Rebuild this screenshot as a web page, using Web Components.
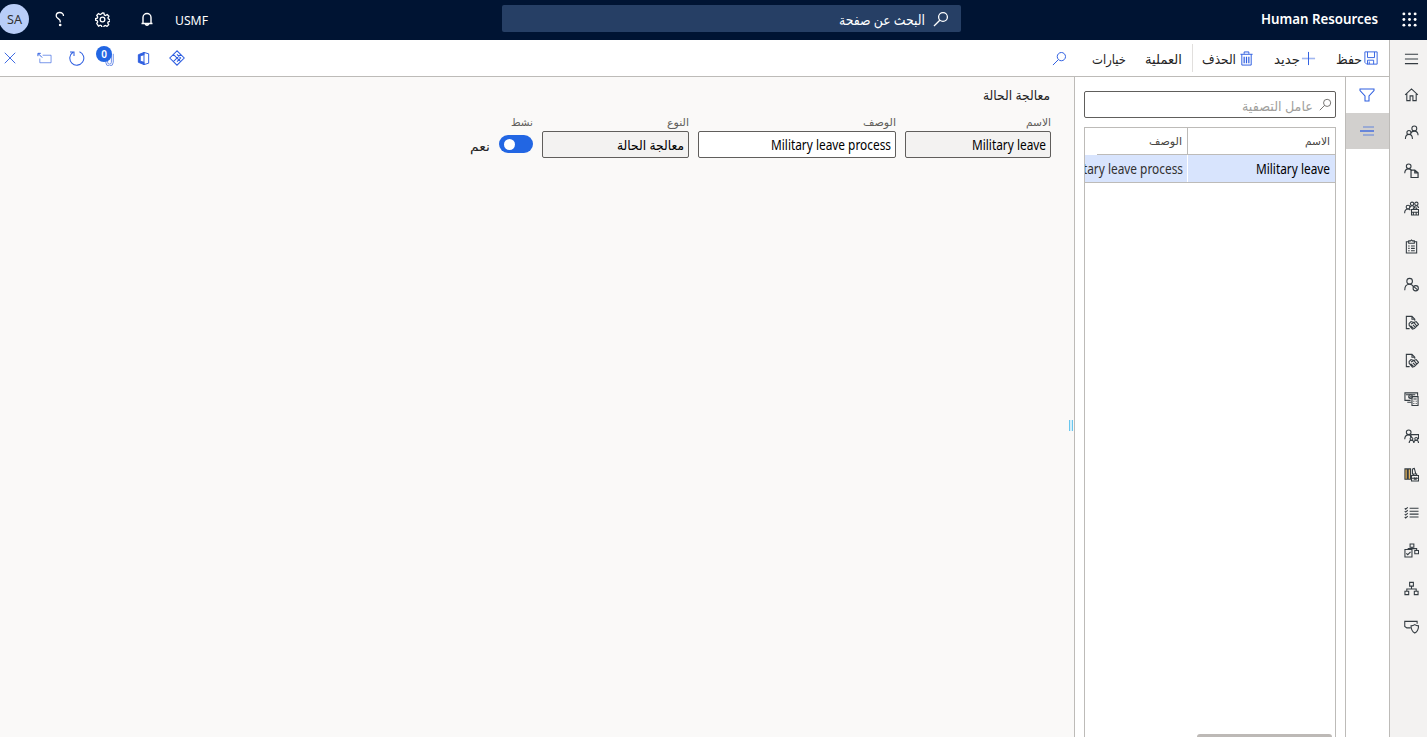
<!DOCTYPE html>
<html lang="ar"><head><meta charset="utf-8"><title>Human Resources</title>
<style>html,body{margin:0;height:100%;overflow:hidden}body{font-family:"Noto Sans","Open Sans","DejaVu Sans",sans-serif;color:#242424}</style>
</head><body><hr-app></hr-app>
<script>
const define=(name,html,ready)=>customElements.define(name,class extends HTMLElement{
  connectedCallback(){
    if(this.shadowRoot)return;
    const r=this.attachShadow({mode:'open'});
    r.innerHTML='<style>*{box-sizing:border-box}</style>'+(typeof html==='function'?html(this):html);
    if(ready)ready(this,r);
  }
});
/* Icons on a 16 unit grid */
const person='<circle cx="6" cy="4.5" r="3"/><path d="M.8 14c0-4 2.200-6.200 5.200-6.200 1.600 0 3 .8 3.800 2.200"/>';
const smallPerson='<circle cx="5" cy="3.500" r="2.500"/><path d="M.8 11c0-3 1.600-4.700 4.200-4.700 1.500 0 2.700.8 3.300 2"/>';
const hand='<path d="M6 14.500H2.500v-13h6l3 3V6M8.500 1.500v3h3"/><path d="M5.500 9l2-2 3 1 2.500-1 2.500 3-4.500 4.500-2 .5L5.500 11zM7.500 9.500l3-1.500 3 3.500M7 11.500l3 2.500M9.500 10.500l2.500 2.500" stroke-width="1.200"/>';
const icons={
 search:'<circle cx="10" cy="6" r="4.4"/><path d="M6.8 9.2L1 15"/>',
 bell:'<path d="M2.5 12.5h11M4 12V6.5a4 4 0 0 1 8 0V12M6.3 13a1.8 1.8 0 0 0 3.4 0"/>',
 gear:'<path d="M8 1l1.5.2.5 2 1.2.5 1.8-1 1.8 1.8-1 1.8.5 1.2 1.6.5v2l-1.8.5-.5 1.2 1 1.8-1.8 1.8-1.8-1-1.2.5-.5 1.6h-2l-.5-1.8-1.2-.5-1.8 1L1.9 12.3l1-1.8-.5-1.2-1.8-.5V7l1.8-.5.5-1.2-1-1.8 1.800-1.800 1.800 1 1.200-.5z"/><circle cx="8" cy="8" r="2.5"/>',
 help:'<path d="M11.5 5c0-2-1.6-3.500-3.800-3.500S4.200 3 4.200 5c0 2.500 4 2.700 4 5v1.500"/><circle cx="8.2" cy="14" r=".7" fill="currentColor"/>',
 waffle:'<g fill="currentColor" stroke="none">'+[2,8,14].map(y=>[2,8,14].map(x=>`<circle cx="${x}" cy="${y}" r="1.55"/>`).join('')).join('')+'</g>',
 close:'<path d="M2 2l12 12M14 2L2 14"/>',
 pop:'<path d="M6 4.500h9v8H3V8" opacity=".65"/><path d="M1.500 3l4 4M1 5.500V2.500h3"/>',
 refresh:'<path d="M10.5 1.700A7 7 0 1 1 4 2.300M1 2h4v4"/>',
 clip:'<path d="M4 3v9a4 4 0 0 0 8 0V3M6 5v7a2 2 0 0 0 4 0V3"/>',
 office:'<path d="M8.500 1.500l5 1.500v10l-5 1.500M8.500 1.500v13"/><path fill="currentColor" d="M8.500 1.500L2.500 4v8l6 2.500V12L4.500 11V5l4-1z"/>',
 diamond:'<path d="M8 .8L.8 8 8 15.200 15.200 8zM4.400 4.400l7.200 7.200M11.600 4.400L4.400 11.600M8 4.400L11.600 8 8 11.600"/>',
 trash:'<path d="M1.500 3.500h13M5.500 3V1h5v2M3 3.500V15h10V3.500"/><path d="M5.500 6v7M8 6v7M10.500 6v7" stroke-width="1.300"/>',
 plus:'<path d="M8 1v14"/><path opacity=".45" stroke-width="1.700" d="M1 8h14"/>',
 save:'<path d="M1 1h14v14H3l-2-2zM4 1v6.500h8V1M4 15v-4.500h7V15M6 12v3"/>',
 menu:'<path d="M1 3.500h14M1 8.500h14M1 13.500h14"/>',
 funnel:'<path d="M1 2h14v1.500L10 9v5H6V9L1 3.500z"/>',
 lines:'<path d="M1 8h14" stroke-width="1.300"/><path opacity=".45" stroke-width="1.700" d="M4 4h11M4 12h11"/>',
 home:'<path d="M1.200 8.300L8 2l6.800 6.300M3 6.700v7.800h3.500v-5h3v5H13V6.700"/>',
 people:'<circle cx="11" cy="3.700" r="2.600"/><path d="M7.300 8.500c.7-1.400 2-2 3.700-2 2.500 0 4 1.700 4 4.500"/><circle cx="5.300" cy="8" r="2.200"/><path d="M1.500 15c0-3 1.400-5 3.800-5s3.700 2 3.700 5"/>',
 persondoc:smallPerson+'<path d="M7.500 7.500h4l3.500 3v5H7.500zM11.500 7.500v3H15" stroke-width="1.300"/>',
 team:'<circle cx="4.300" cy="6.500" r="2"/><path d="M.7 13c0-3 1.300-4.400 3.600-4.400 1 0 2 .5 2.500 1.200"/><circle cx="8.600" cy="3" r="1.800"/><circle cx="13.200" cy="3" r="1.800"/><path d="M6 7c.5-1.400 1.400-2 2.600-2s2 .6 2.400 1.800C11.400 5.600 12.200 5 13.200 5s2.200.8 2.300 2.500M8 9h7.500v6H8zM10 9V7.500h3.500V9M8 12h7.500M10 15v-3M13 15v-3"/>',
 clipboard:'<path d="M5 3H2.500v12h11V3H11M5 2h2l1-1 1 1h2v2.500H5zM4.500 7.500h1.500M7.500 7.500h4M4.500 10h1.500M7.500 10h4M4.500 12.500h1.500M7.500 12.500h4"/>',
 block:person+'<circle cx="12.500" cy="12" r="2.800"/><path d="M10.500 10.200l4 3.600"/>',
 hand,
 calc:'<path d="M7 10H1V2h13.500v3M3.500 12H8M2 4h10M5 7l3-1"/><circle cx="7" cy="6" r="2"/><path d="M8.500 6h6.500v9.500H8.500zM10 8.500h3.500M10 11h1M12.500 11h1M10 13.300h1M12.500 13.300h1"/>',
 training:smallPerson+'<path d="M7 6h8.500v5M7 6v3"/><circle cx="8" cy="10.500" r="1.500"/><circle cx="13" cy="10.500" r="1.500"/><path d="M5.500 15c0-2 1-3 2.500-3s2.400 1 2.500 3c.1-2 1-3 2.500-3s2.500 1 2.500 3"/>',
 books:'<path d="M1 2h2.500v11H1zM4.500 2H7v11H4.500z" fill="#e4b45c"/><path d="M9 2l2-.5L12.500 7M9 2v6M8 9h7.500v6H8zM10 9V7.500h3.500V9M8 12h7.500M11 11v2h2v-2"/>',
 checks:'<path d="M6 3.500h9.500M6 6.600h9.500M6 9.700h9.500M6 12.800h9.500M.8 3.500l1 1L4 2.500M.8 6.600l1 1L4 5.600M.8 9.700l1 1L4 8.700M.8 12.800l1 1L4 11.800"/>',
 flowcheck:'<path d="M1 7h7.500v8H1zM2.500 11l1.500 1.500 3-3M6.500 1h4v3.500h-4zM8.500 4.500V6M4.500 7V6h9v2M11.500 8h4v3.500h-4z"/>',
 org:'<path d="M6 1.500h4v4H6zM8 5.500v3M3 11V8.500h10V11M1 11h4v3.500H1zM11 11h4v3.500h-4z"/>',
 shield:'<path d="M7 9.500H3L.8 8V2.500H14V5M11.500 6c1.200.9 2.400 1.300 4 1.300 0 4.200-1.100 6.200-4 7.700-2.900-1.500-4-3.500-4-7.700 1.600 0 2.800-.4 4-1.300z"/>'
};
define('ui-icon',e=>{const s=+(e.getAttribute('size')||16);return `<style>:host{display:block;flex:none;width:${s}px;height:${s}px}svg{display:block}</style><svg width="${s}" height="${s}" viewBox="0 0 16 16" fill="none" stroke="currentColor" stroke-width="${e.getAttribute('weight')||1.05}">${icons[e.getAttribute('name')]}</svg>`});
/* A single line label condensed to a set measure */
define('fit-text',e=>`<style>:host{display:block;flex:none;width:${e.getAttribute('w')}px;height:20px;line-height:20px;white-space:nowrap;direction:ltr}span{display:inline-block;transform-origin:0 50%}</style><span><slot></slot></span>`,(e,r)=>{
  const s=r.querySelector('span');
  requestAnimationFrame(()=>{s.style.transform='none';const n=s.getBoundingClientRect().width;if(n)s.style.transform=`scaleX(${+e.getAttribute('w')/n})`});
});
define('top-bar',`<style>:host{display:flex;align-items:center;height:40px;background:#001433;color:#fff;flex:none;font-size:13px}
.av{width:30px;height:30px;border-radius:50%;background:#b8cdf8;color:#323130;margin:-3px 0 0 -1px;display:flex;align-items:center;justify-content:center;flex:none}
.s{margin-left:294px;width:459px;height:27px;border-radius:2px;background:#263f65;display:flex;align-items:center;justify-content:flex-end;gap:8px;padding-right:12px;margin-top:-3px}
ui-icon{margin-top:-2px}</style>
<div class="av"><fit-text w="15">SA</fit-text></div><ui-icon name="help" weight="1.3" style="margin-left:23px"></ui-icon><ui-icon name="gear" size="15" weight="1.4" style="margin-left:27px"></ui-icon><ui-icon name="bell" weight="1.4" style="margin-left:29px"></ui-icon><fit-text w="33" style="margin-left:20px">USMF</fit-text>
<div class="s"><fit-text w="86" style="font-size:14px;margin-top:2px">البحث عن صفحة</fit-text><ui-icon name="search" weight="1.3" style="margin-top:0"></ui-icon></div>
<fit-text w="117" style="margin-left:300px;font-weight:600;font-size:14px;margin-top:-2px">Human Resources</fit-text><ui-icon name="waffle" size="15" style="margin-left:24px"></ui-icon>`);
define('tool-bar',`<style>:host{display:flex;align-items:center;height:37px;border-bottom:1px solid #bdbbb8;background:#fff;flex:none;font-size:13.5px}
ui-icon{color:#2f5fe0}.clip{position:relative;margin-left:17px}.b{position:absolute;left:-6px;top:-5px;width:16px;height:16px;border-radius:50%;background:#2266e3;color:#fff;font:600 10px/16px "Noto Sans";text-align:center}
.sep{width:1px;height:28px;background:#e1dfdd;margin-left:10px}fit-text{margin-top:2px}</style>
<ui-icon name="close" size="14" style="margin-left:3px"></ui-icon><ui-icon name="pop" size="15" style="margin-left:20px"></ui-icon><ui-icon name="refresh" style="margin-left:17px"></ui-icon>
<div class="clip"><ui-icon name="clip" size="15" style="opacity:.7"></ui-icon><span class="b">0</span></div>
<ui-icon name="office" size="15" style="margin-left:19px"></ui-icon><ui-icon name="diamond" size="16" style="margin-left:18px"></ui-icon>
<ui-icon name="search" size="15" style="margin-left:867px"></ui-icon><fit-text w="34" style="margin-left:25px;font-weight:500">خيارات</fit-text><fit-text w="37" style="margin-left:19px;font-weight:500">العملية</fit-text><span class="sep"></span>
<fit-text w="34" style="margin-left:9px">الحذف</fit-text><ui-icon name="trash" size="15" style="margin-left:3px"></ui-icon><fit-text w="26" style="margin-left:20px">جديد</fit-text><ui-icon name="plus" size="15" style="margin-left:1px"></ui-icon><fit-text w="26" style="margin-left:20px">حفظ</fit-text><ui-icon name="save" size="14" style="margin-left:2px"></ui-icon>`);
define('form-field',e=>`<style>:host{display:block;flex:none;width:${e.getAttribute('width')}px}.l{display:flex;justify-content:flex-end;height:19px;font-size:10.5px;font-weight:500;color:#605e5c}.i{height:27px;border:1px solid #605e5c;border-radius:2px;background:${e.hasAttribute('edit')?'#fff':'#f3f2f1'};display:flex;justify-content:flex-end;align-items:center;padding:0 4px 0;font-size:13.5px;color:#000}</style><div class="l"><fit-text w="${e.getAttribute('lw')}">${e.getAttribute('label')}</fit-text></div><div class="i"><slot></slot></div>`);
define('toggle-field',`<style>:host{display:block;width:63px}.l{display:flex;justify-content:flex-end;height:19px;font-size:10.5px;font-weight:500;color:#605e5c}.r{display:flex;align-items:center;gap:9px;height:26px;font-size:13px}.t{width:34px;height:18px;border-radius:9px;background:#2266e3;padding:3.500px 5px}.t i{display:block;width:11px;height:11px;border-radius:50%;background:#fff}</style><div class="l"><fit-text w="22">نشط</fit-text></div><div class="r"><fit-text w="20" style="margin-top:3px">نعم</fit-text><div class="t"><i></i></div></div>`);
define('case-form',`<style>:host{display:flex;flex:1;position:relative;background:#faf9f8;border-right:1px solid #bdbbb8;flex-direction:column;align-items:flex-end;padding:8px 23px 0 0}.f{display:flex;gap:9px;margin-top:7px}.g{position:absolute;right:1px;top:343px;width:4px;height:11px;border:solid #69c7ef;border-width:0 1px;background:#d5effb}</style>
<fit-text w="67" style="font-size:13.5px;margin-right:1px">معالجة الحالة</fit-text><div class="f"><toggle-field></toggle-field><form-field width="147" label="النوع" lw="22"><fit-text w="67">معالجة الحالة</fit-text></form-field><form-field width="198" label="الوصف" lw="33" edit><fit-text w="120">Military leave process</fit-text></form-field><form-field width="146" label="الاسم" lw="25"><fit-text w="74">Military leave</fit-text></form-field></div><span class="g"></span>`);
define('record-list',`<style>:host{display:flex;flex-direction:column;width:271px;flex:none;background:#fff;border-right:1px solid #bdbbb8;padding:14px 9px 0}
.q{height:27px;border:1px solid #605e5c;border-radius:2px;display:flex;align-items:center;justify-content:flex-end;gap:6px;padding-right:3px;color:#a19f9d;font-size:13.5px;flex:none}.q ui-icon{color:#605e5c}
.t{position:relative;margin-top:9px;flex:1;border:1px solid #bdbbb8;border-bottom:0;overflow:hidden}.r{display:grid;grid-template-columns:102px 1fr}.r>div{display:flex;align-items:center;justify-content:flex-end;padding:0 4px 0 0;overflow:hidden}
.h{height:26px;font-size:10.5px;font-weight:500;color:#484644}.h>div:last-child{border-left:1px solid #bdbbb8;padding:0 5px 0 0}.h>div:first-child{padding-right:5px}.line{height:1px;background:#bdbbb8;margin-left:12px}.d{height:28px;background:#d8e4fd;border-bottom:1px solid #bdbbb8;font-size:13.5px;color:#000}.d>div:last-child{border-left:1px solid #fff;padding-right:5px}.sb{position:absolute;right:3px;bottom:0;width:135px;height:3px;background:#bdb9b6;border-radius:3px 3px 0 0}</style>
<div class="q"><fit-text w="71" style="margin-top:3px">عامل التصفية</fit-text><ui-icon name="search" size="13"></ui-icon></div>
<div class="t"><div class="r h"><div><fit-text w="33">الوصف</fit-text></div><div><fit-text w="25">الاسم</fit-text></div></div><div class="line"></div><div class="r d"><div><fit-text w="120" style="color:#323130">Military leave process</fit-text></div><div><fit-text w="74">Military leave</fit-text></div></div><span class="sb"></span></div>`);
define('view-tabs',`<style>:host{display:block;width:43px;flex:none;background:#fff;color:#2f5fe0}div{height:36px;display:flex;align-items:center;justify-content:center;padding-right:1px}.a{background:#d2d0ce}</style><div><ui-icon name="funnel" size="16"></ui-icon></div><div class="a"><ui-icon name="lines"></ui-icon></div>`);
define('side-nav',`<style>:host{display:flex;flex-direction:column;width:38px;flex:none;border-left:1px solid #bdbbb8;background:#f3f2f1;color:#343c42;align-items:center;padding:11px 0 0 5px;gap:23px}ui-icon:nth-of-type(2){margin-top:-2px}</style>`+['menu','home','people','persondoc','team','clipboard','block','hand','hand','calc','training','books','checks','flowcheck','org','shield'].map(n=>`<ui-icon name="${n}" size="15" weight="1.15"></ui-icon>`).join(''));
define('hr-app',`<style>:host{display:flex;flex-direction:column;height:100vh;background:#fff}.b,.p{display:flex;flex:1;min-height:0}.m{flex:1;display:flex;flex-direction:column;min-width:0}</style><top-bar></top-bar><div class="b"><div class="m"><tool-bar></tool-bar><div class="p"><case-form></case-form><record-list></record-list><view-tabs></view-tabs></div></div><side-nav></side-nav></div>`);
</script></body></html>
